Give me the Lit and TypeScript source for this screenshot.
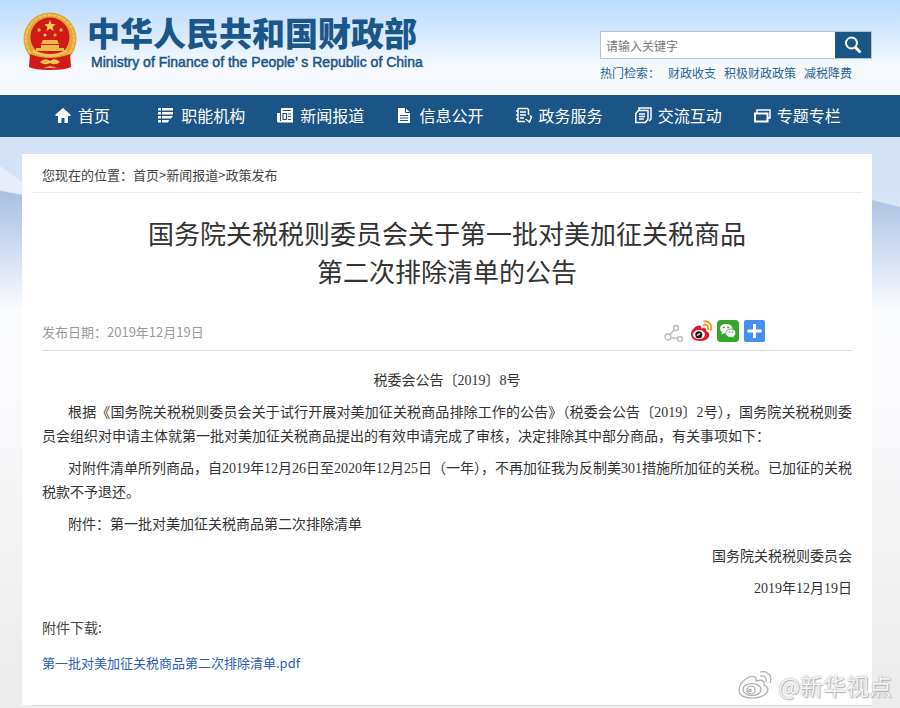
import { LitElement, html, css, svg } from "lit";
import { customElement } from "lit/decorators.js";

const emblem = html`<svg class="emblem" viewBox="0 0 54 58" role="img" aria-label="国徽">
  <circle cx="27" cy="27" r="26.500" fill="#dfa63a" />
  <circle cx="27" cy="27" r="24" fill="none" stroke="#f0c455" stroke-width="2" stroke-dasharray="4 1" />
  <circle cx="27" cy="25" r="19.500" fill="#d01a18" />
  <path d="M27 8l1.600 3.900 4.200.3-3.200 2.700 1 4.100-3.600-2.200-3.600 2.200 1-4.100-3.200-2.700 4.200-.3z" fill="#f6d04c" />
  <g fill="#f0c040"><circle cx="16" cy="18" r="1.700" /><circle cx="38" cy="18" r="1.700" /><circle cx="22" cy="23" r="1.600" /><circle cx="32" cy="23" r="1.600" /></g>
  <path d="M20 28h14l2 4H18zM18 33h18v3h5v3H13v-3h5z" fill="#eeb945" />
  <path d="M7 42q20 8 40 0l1 13q-5 3-21 3T6 55z" fill="#d01a18" />
  <path d="M10 39q17 9 34 0" fill="none" stroke="#f0c356" stroke-width="3" />
  <path d="M17 50q5-5 10-1 5-4 10 1-5 4-10 1-5 3-10-1zM20 56l7-2 7 2z" fill="#f0c356" />
</svg>`;

const navIcons = [
  svg`<path d="M9 2l7.500 6.500V10H14v7h-3.500v-5h-3v5H4v-7H1.500V8.500z" fill="#fff"/>`,
  svg`<path d="M1 2h3v2.500H1zM5 2h11v2.500H5zM1 6h3v2.500H1zM5 6h11v2.500H5zM1 10h3v2.500H1zM5 10h11l-2 2.500H5zM1 14h3v2.500H1zM5 14h7l-1 2.500H5z" fill="#fff"/>`,
  svg`<path d="M5 2h12v14.500H2.500Q1 16.500 1 15V7h3v8h1z" fill="#fff"/><path d="M7 4.500h8M7 7.500h3.500v6H7zM12 8h3M12 10.500h3M12 13.500h3" stroke="#1a5585" stroke-width="1.200" fill="none"/>`,
  svg`<path d="M3 2h7.500L15 6.500V17H3z" fill="#fff"/><path d="M10.500 2v4.500H15M5 9.500h8M5 12h8M5 14.500h8" stroke="#1a5585" stroke-width="1" fill="none"/>`,
  svg`<path d="M3 2.500h9.500l1 1V9M5 6h6M5 9h6M5 12h4M1 5h2.500M1 9h2.500M1 13h2.500M3 2.500v13h7M15 9.500l1.500 1.500-2 5-4-3" stroke="#fff" stroke-width="1.500" fill="none"/>`,
  svg`<path d="M5 4V2h12v11l-2 2M1.800 7.500L4.500 4.500H14V13l-2.500 3.500H1.800zM5 8h6M5 10.500h6M5 13h5" stroke="#fff" stroke-width="1.500" fill="none"/>`,
  svg`<path d="M4 7V4h13v8h-2" stroke="#fff" stroke-width="1.500" fill="none"/><path d="M2 7.500h12.500V15.500H2z" stroke="#fff" stroke-width="2" fill="none"/>`,
];
const navLabels = ["首页", "职能机构", "新闻报道", "信息公开", "政务服务", "交流互动", "专题专栏"];

@customElement("app-root")
export class AppRoot extends LitElement {
  static styles = css`
    :host {
      display: block;
      position: relative;
      overflow: hidden;
      min-height: 100vh;
      background: linear-gradient(#fafbfd, #fafafc 400px, #eeeeef 640px, #ececec);
      font-family: "Noto Sans CJK SC", sans-serif;
      font-size: 13px;
      color: #444;
    }
    * { box-sizing: border-box; }
    a { color: inherit; text-decoration: none; }
    h1, p { margin: 0; font-weight: 400; }
    .scene {
      position: absolute;
      inset: 0 0 auto;
      width: 100%;
      height: 340px;
    }
    header, nav, main { position: relative; }
    header {
      display: flex;
      justify-content: space-between;
      height: 95px;
      padding: 0 28px 0 23px;
    }
    .brand { display: flex; gap: 10px; padding-top: 12px; color: #1b5688; }
    .emblem { width: 54px; height: 58px; }
    .zh { font-size: 33px; font-weight: 900; line-height: 40px; white-space: nowrap; }
    .en {
      padding-left: 4px;
      font: 14px/20px "Liberation Sans", sans-serif;
      -webkit-text-stroke: 0.5px #1b5688;
      white-space: nowrap;
    }
    .tools { width: 272px; padding-top: 31px; }
    .search { display: flex; height: 28px; border: 1px solid #b9c3cd; }
    .search input {
      flex: 1;
      min-width: 0;
      padding: 0 5px;
      border: 0;
      background: #fff;
      font: 12px "Noto Sans CJK SC", sans-serif;
    }
    .search input::placeholder { color: #777; opacity: 1; }
    .search button {
      display: grid;
      place-items: center;
      width: 36px;
      padding: 0;
      border: 0;
      background: #1a5585;
    }
    .search svg { width: 20px; height: 20px; }
    .hot {
      display: flex;
      gap: 8px;
      padding-top: 5px;
      font-size: 12px;
      line-height: 18px;
      color: #2a6496;
      white-space: nowrap;
    }
    nav {
      display: grid;
      grid-template-columns: 103fr repeat(6, 119fr);
      align-items: center;
      height: 42px;
      padding: 0 28px 2px 54px;
      background: #1a5585;
      color: #fff;
      font-size: 16px;
    }
    nav a { display: flex; align-items: center; gap: 6px; white-space: nowrap; }
    nav svg { width: 18px; height: 18px; }
    main {
      margin: 17px 28px 0 22px;
      padding-bottom: 24px;
      background: #fff;
    }
    .crumbs {
      height: 39px;
      margin: 0 10px;
      padding: 2px 10px 0;
      border-bottom: 1px solid #ececec;
      line-height: 38px;
    }
    article { padding: 0 20px; }
    h1 {
      padding-top: 21px;
      font-size: 26px;
      line-height: 38px;
      text-align: center;
      color: #333;
    }
    .meta {
      display: flex;
      justify-content: space-between;
      align-items: center;
      height: 40px;
      margin-top: 20px;
      padding: 2px 86px 0 0;
      color: #999;
    }
    .share { display: flex; gap: 5px; }
    .share button { width: 22px; height: 22px; padding: 0; border: 0; background: none; }
    .share svg { display: block; width: 22px; height: 22px; }
    .text {
      padding-top: 18px;
      border-top: 1px solid #ddd;
      font: 14px/24px "Liberation Serif", "Noto Sans CJK SC", sans-serif;
      color: #333;
      text-align: justify;
    }
    .text p { margin-bottom: 8px; text-indent: 26px; }
    .text .center { text-align: center; text-indent: 0; }
    .text .right { text-align: right; text-indent: 0; }
    .files { line-height: 36px; }
    .files p { font-size: 14px; }
    .files a { color: #2a5db0; }
    .edge { height: 1px; margin: 0 28px 0 32px; background: #ddd; position: relative; }
    .mark {
      position: absolute;
      right: 8px;
      bottom: 5px;
      display: flex;
      align-items: center;
      gap: 5px;
      font-size: 23px;
      line-height: 36px;
      color: #f4f4f4;
      text-shadow: 0 0 2px #999, 1px 1px 1px #bbb;
      white-space: nowrap;
    }
    .mark svg { width: 35px; height: 30px; }
  `;

  render() {
    return html`
      <svg class="scene" viewBox="0 0 900 340" preserveAspectRatio="none" aria-hidden="true">
        <defs>
          <linearGradient id="sky" x1="0" y1="0" x2="0" y2="1">
            <stop offset="0" stop-color="#badaff" /><stop offset="0.350" stop-color="#d6e9ff" /><stop offset="0.700" stop-color="#f6faff" /><stop offset="1" stop-color="#f6f8fc" />
          </linearGradient>
          <linearGradient id="haze" x1="0" y1="0" x2="0" y2="1">
            <stop offset="0" stop-color="#d3e1f5" /><stop offset="0.400" stop-color="#d6e3f5" /><stop offset="0.850" stop-color="#fafbfd" />
          </linearGradient>
          <linearGradient id="hill" x1="0" y1="0" x2="0" y2="1">
            <stop offset="0" stop-color="#aabfe2" /><stop offset="0.400" stop-color="#c8d7ef" /><stop offset="1" stop-color="#fafbfd" />
          </linearGradient>
        </defs>
        <rect width="900" height="95" fill="url(#sky)" />
        <rect y="95" width="900" height="245" fill="url(#haze)" />
        <path d="M0 166l22 16v12L0 190z" fill="#e6edf8" />
        <path d="M0 191l22 4V310H0zM872 200l28 7V310h-28z" fill="url(#hill)" />
      </svg>
      <header>
        <div class="brand">
          ${emblem}
          <div>
            <div class="zh">中华人民共和国财政部</div>
            <div class="en">Ministry of Finance of the People’ s Republic of China</div>
          </div>
        </div>
        <div class="tools">
          <form class="search">
            <input type="text" aria-label="搜索" placeholder="请输入关键字" />
            <button type="button" aria-label="搜索">
              <svg viewBox="0 0 20 20" fill="none" stroke="#fff"><circle cx="8.500" cy="8" r="5.500" stroke-width="2" /><path d="M12.500 12.500l5 5" stroke-width="3" /></svg>
            </button>
          </form>
          <div class="hot"><span>热门检索：</span><a href="#">财政收支</a><a href="#">积极财政政策</a><a href="#">减税降费</a></div>
        </div>
      </header>
      <nav>
        ${navLabels.map((label, i) => html`<a href="#"><svg viewBox="0 0 18 18" aria-hidden="true">${navIcons[i]}</svg>${label}</a>`)}
      </nav>
      <main>
        <div class="crumbs">您现在的位置：<a href="#">首页</a>&gt;<a href="#">新闻报道</a>&gt;<a href="#">政策发布</a></div>
        <article>
          <h1>国务院关税税则委员会关于第一批对美加征关税商品<br />第二次排除清单的公告</h1>
          <div class="meta">
            <span>发布日期：2019年12月19日</span>
            <div class="share">
              <button aria-label="分享"><svg viewBox="0 0 22 22" fill="none" stroke="#bbb" stroke-width="1.300"><circle cx="5" cy="17" r="3" /><circle cx="13" cy="8" r="2.500" /><circle cx="17" cy="19" r="2.500" /><path d="M7 14.500l4-4.500M8 17.500l6.500 1" /></svg></button>
              <button aria-label="微博"><svg viewBox="0 0 22 22"><path d="M1 14C1 9 8 4 10.500 6c1 .8.500 2 .5 2.500 4-1.500 6 0 5 2.500 6 2 4 10-6 10-6 0-9-3-9-7z" fill="#e6162d" /><ellipse cx="9" cy="14.500" rx="6" ry="4.500" fill="#fff" /><circle cx="8.800" cy="14.700" r="3.500" fill="#111" /><path d="M7 15.500l3-2" stroke="#fff" stroke-width="1.500" /><path d="M13 5c4-1 6 1 5 5M13.500 1.500c6-1 9 4 7 9" fill="none" stroke="#f79b2c" stroke-width="2" /></svg></button>
              <button aria-label="微信"><svg viewBox="0 0 22 22"><rect width="22" height="22" rx="4" fill="#35a52c" /><path d="M9 4c-4 0-6 2-6 4.800 0 1.500.8 2.700 2 3.500L4.500 14.500l2.500-1.300c5 1 8.500-1 8.500-4.500C15.500 6 13 4 9 4z" fill="#fff" /><path d="M14 9c-3.300 0-5.200 2-5.200 4.200 0 3 3 4.600 6.200 4l2.300 1.300-.5-2.200c1.300-.8 2-2 2-3.200C18.800 10.500 17 9 14 9z" fill="#fff" stroke="#35a52c" stroke-width=".8" /><g fill="#35a52c"><circle cx="7" cy="7.500" r="1" /><circle cx="11" cy="7.500" r="1" /><circle cx="12.300" cy="12" r=".8" /><circle cx="15.500" cy="12" r=".8" /></g></svg></button>
              <button aria-label="更多分享"><svg viewBox="0 0 22 22"><rect width="21" height="22" rx="2" fill="#4590ee" /><path d="M10.500 4v14M3.500 11h14" stroke="#fff" stroke-width="3" /></svg></button>
            </div>
          </div>
          <div class="text">
            <p class="center">税委会公告〔2019〕8号</p>
            <p>根据《国务院关税税则委员会关于试行开展对美加征关税商品排除工作的公告》（税委会公告〔2019〕2号），国务院关税税则委员会组织对申请主体就第一批对美加征关税商品提出的有效申请完成了审核，决定排除其中部分商品，有关事项如下：</p>
            <p>对附件清单所列商品，自2019年12月26日至2020年12月25日（一年），不再加征我为反制美301措施所加征的关税。已加征的关税税款不予退还。</p>
            <p>附件：第一批对美加征关税商品第二次排除清单</p>
            <p class="right">国务院关税税则委员会</p>
            <p class="right">2019年12月19日</p>
          </div>
          <div class="files">
            <p>附件下载:</p>
            <a href="#">第一批对美加征关税商品第二次排除清单.pdf</a>
          </div>
        </article>
      </main>
      <div class="edge"></div>
      <div class="mark">
        <svg viewBox="0 0 35 30" fill="#fafafa" stroke="#aaa" stroke-width="1.200" aria-hidden="true"><path d="M1 20C1 12 12 4 17 7c2 1 1 3 1 4 6-2 9 0 8 4 8 3 3 13-11 13C6 28 1 25 1 20z" /><ellipse cx="14" cy="19.500" rx="9" ry="6" /><circle cx="13" cy="20" r="4" /><circle cx="12" cy="20.500" r="1.200" /><path d="M22 6c5-1 7 2 6 6M22 2c8-2 13 4 10 11" fill="none" /></svg>
        <span>@新华视点</span>
      </div>
    `;
  }
}
